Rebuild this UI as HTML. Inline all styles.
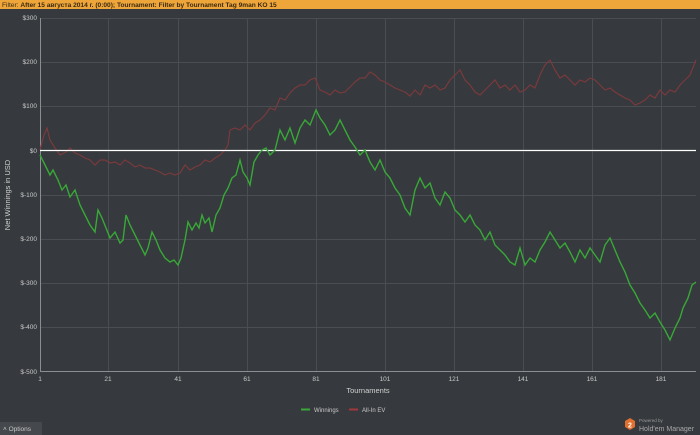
<!DOCTYPE html>
<html><head><style>
html,body{margin:0;padding:0;width:700px;height:435px;overflow:hidden;background:#36393d;font-family:"Liberation Sans",sans-serif}
</style></head><body>
<svg width="700" height="435" xmlns="http://www.w3.org/2000/svg" font-family="Liberation Sans, sans-serif">
<rect width="700" height="435" fill="#36393d"/>
<rect width="700" height="9" fill="#eea53a"/>
<text x="2" y="7" font-size="6.6" fill="#3a2a10">Filter: <tspan font-weight="bold">After 15 августа 2014 г. (0:00);  Tournament: Filter by Tournament Tag  9man KO 15</tspan></text>
<g stroke="#4a4d52" stroke-width="1">
<line x1="108.5" y1="18" x2="108.5" y2="372"/><line x1="178.5" y1="18" x2="178.5" y2="372"/><line x1="247.5" y1="18" x2="247.5" y2="372"/><line x1="316.5" y1="18" x2="316.5" y2="372"/><line x1="385.5" y1="18" x2="385.5" y2="372"/><line x1="454.5" y1="18" x2="454.5" y2="372"/><line x1="523.5" y1="18" x2="523.5" y2="372"/><line x1="592.5" y1="18" x2="592.5" y2="372"/><line x1="661.5" y1="18" x2="661.5" y2="372"/>
<line x1="40" y1="18.5" x2="696" y2="18.5"/><line x1="40" y1="62.5" x2="696" y2="62.5"/><line x1="40" y1="106.5" x2="696" y2="106.5"/><line x1="40" y1="195.5" x2="696" y2="195.5"/><line x1="40" y1="239.5" x2="696" y2="239.5"/><line x1="40" y1="283.5" x2="696" y2="283.5"/><line x1="40" y1="327.5" x2="696" y2="327.5"/>
</g>
<line x1="40.5" y1="18" x2="40.5" y2="372" stroke="#8a8d92"/>
<line x1="40" y1="371.5" x2="696" y2="371.5" stroke="#8a8d92"/>
<g font-size="6.5" fill="#c8c8c8" text-anchor="end">
<text x="37" y="20">$300</text><text x="37" y="64">$200</text><text x="37" y="108">$100</text><text x="37" y="153">$0</text><text x="37" y="197">$-100</text><text x="37" y="241">$-200</text><text x="37" y="285">$-300</text><text x="37" y="329">$-400</text><text x="37" y="374">$-500</text>
</g>
<g font-size="6.5" fill="#c8c8c8" text-anchor="middle">
<text x="40" y="381">1</text><text x="108" y="381">21</text><text x="178" y="381">41</text><text x="247" y="381">61</text><text x="316" y="381">81</text><text x="385" y="381">101</text><text x="454" y="381">121</text><text x="523" y="381">141</text><text x="592" y="381">161</text><text x="661" y="381">181</text>
</g>
<text x="368" y="393" font-size="7.5" fill="#d0d0d0" text-anchor="middle">Tournaments</text>
<text transform="translate(10,195) rotate(-90)" font-size="7.5" fill="#d0d0d0" text-anchor="middle">Net Winnings in USD</text>
<polyline fill="none" stroke="#7a3a3c" stroke-width="1.2" points="40,150 44,135 47,128 50,140 55,148 60,155 66,152 70,148 75,153 80,155 85,158 90,160 95,165 100,160 105,160 110,163 115,162 120,165 125,160 130,163 135,167 140,165 145,168 150,168 155,170 160,172 165,175 170,173 175,175 180,173 185,165 190,170 195,167 200,165 205,160 210,162 215,158 220,155 225,150 228,145 230,130 235,128 240,130 245,125 250,130 255,123 260,120 265,115 270,108 275,110 280,98 285,100 290,93 295,88 300,85 305,85 310,80 315,78 320,90 325,92 330,95 335,90 340,93 345,92 350,87 355,82 360,78 365,78 370,72 375,75 380,80 385,82 390,85 395,88 400,90 405,92 410,96 415,90 420,95 425,85 430,88 435,85 440,90 445,88 450,80 455,75 460,70 465,80 470,85 475,92 480,95 485,90 490,85 495,80 500,88 505,85 510,90 515,85 520,92 525,90 530,85 535,88 540,75 545,65 550,60 555,70 560,78 565,75 570,80 575,85 580,80 585,82 590,78 595,80 600,85 605,90 610,88 615,92 620,95 625,98 630,100 635,105 640,103 645,100 650,95 655,98 660,90 665,95 670,90 675,92 680,85 685,80 690,75 696,60"/>
<line x1="40" y1="150.5" x2="696" y2="150.5" stroke="#ffffff" stroke-width="1.2"/>
<polyline fill="none" stroke="#38a838" stroke-width="1.4" points="40,155 45,165 50,175 53,170 58,180 62,190 66,185 70,197 75,190 80,205 85,215 90,225 95,232 98,210 102,218 106,228 110,238 115,232 120,243 123,240 126,215 130,225 135,235 140,245 145,255 148,248 152,232 156,240 160,250 165,258 170,262 174,260 178,265 181,258 185,240 188,222 192,230 196,223 199,228 202,215 205,223 209,218 212,232 216,215 220,208 224,195 228,188 232,178 236,175 240,160 243,172 247,178 250,185 254,162 258,155 262,150 266,148 270,155 275,150 280,130 285,140 290,128 295,143 300,128 305,120 310,125 316,110 320,118 325,125 330,135 335,130 340,120 345,130 350,140 355,147 360,155 365,150 370,162 375,170 380,160 385,172 390,178 395,188 400,195 405,208 410,215 415,190 420,178 425,188 430,183 435,198 440,205 445,192 450,198 455,210 460,215 465,222 470,215 475,225 480,230 485,240 490,232 495,245 500,250 505,255 510,262 515,265 520,248 525,265 530,258 535,262 540,250 545,242 550,232 555,240 560,248 565,243 570,252 575,262 580,250 585,258 590,248 595,255 600,262 605,245 610,238 615,250 620,262 625,272 630,285 635,293 640,303 645,310 650,318 655,313 660,322 665,330 670,340 675,328 680,318 683,308 688,298 692,285 696,282"/>
<line x1="301" y1="409.5" x2="310" y2="409.5" stroke="#38a838" stroke-width="2"/>
<text x="314" y="412" font-size="6" fill="#c8c8c8">Winnings</text>
<line x1="349" y1="409.5" x2="358" y2="409.5" stroke="#a0383c" stroke-width="2"/>
<text x="362" y="412" font-size="6" fill="#c8c8c8">All-In EV</text>
<rect x="0" y="422" width="42" height="13" fill="#45484c"/>
<text x="3" y="431" font-size="6.5" fill="#c8c8c8">˄  Options</text>
<path d="M630 418 l5 3 v6 l-5 3 l-5 -3 v-6 z" fill="#e07030"/>
<text x="630" y="427.5" font-size="7" font-weight="bold" fill="#fff" text-anchor="middle">2</text>
<text x="639" y="422" font-size="4.5" fill="#9a9a9a">Powered by</text>
<text x="639" y="431" font-size="7" fill="#a8a8a8">Hold'em Manager</text>
</svg>
</body></html>
